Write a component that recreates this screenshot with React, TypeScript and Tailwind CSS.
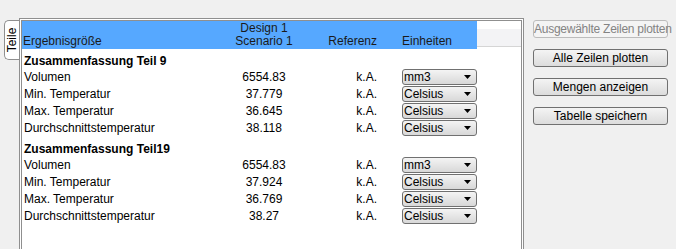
import React from 'react';

// ==========================================
// ERGEBNISTABELLE
// ==========================================

type Row = { label: string; value: string; unit: string };

const groups: { title: string; rows: Row[] }[] = [
  {
    title: 'Zusammenfassung Teil 9',
    rows: [
      { label: 'Volumen', value: '6554.83', unit: 'mm3' },
      { label: 'Min. Temperatur', value: '37.779', unit: 'Celsius' },
      { label: 'Max. Temperatur', value: '36.645', unit: 'Celsius' },
      { label: 'Durchschnittstemperatur', value: '38.118', unit: 'Celsius' },
    ],
  },
  {
    title: 'Zusammenfassung Teil19',
    rows: [
      { label: 'Volumen', value: '6554.83', unit: 'mm3' },
      { label: 'Min. Temperatur', value: '37.924', unit: 'Celsius' },
      { label: 'Max. Temperatur', value: '36.769', unit: 'Celsius' },
      { label: 'Durchschnittstemperatur', value: '38.27', unit: 'Celsius' },
    ],
  },
];

function Combo({ value }: { value: string }) {
  return (
    <div className="flex h-[16px] w-[75px] items-center justify-between rounded-[3px] border border-[#707070] bg-gradient-to-b from-[#f4f4f4] to-[#d8d8d8] pl-[1px] pr-[5px]">
      <span className="leading-[14px]">{value}</span>
      {/* Pfeil nach unten */}
      <svg width="7" height="4" viewBox="0 0 7 4" className="mb-[1px]">
        <path d="M0 0h7L3.5 4z" fill="#000" />
      </svg>
    </div>
  );
}

function Button({ label, disabled }: { label: string; disabled?: boolean }) {
  return (
    <button
      className={
        disabled
          ? 'h-[18px] w-[135px] whitespace-nowrap rounded-[3px] border border-[#bcbcbc] bg-[#f4f4f4] text-[12px] leading-[16px] tracking-[-0.25px] text-[#838383]'
          : 'h-[18px] w-[135px] whitespace-nowrap rounded-[3px] border border-[#707070] bg-gradient-to-b from-[#f4f4f4] to-[#dcdcdc] text-[12px] leading-[16px] text-black'
      }
    >
      {label}
    </button>
  );
}

export default function App() {
  return (
    <div
      className="flex h-[249px] w-[676px] overflow-hidden bg-[#f0f0f0] pt-[18px] text-[12px] text-black"
      style={{ fontFamily: '"Liberation Sans", Arial, sans-serif' }}
    >
      {/* Left: vertical tab */}
      <div className="w-[19px] shrink-0 pl-[4px] pt-[2px]">
        <div className="flex h-[40px] w-[16px] items-center justify-center rounded-l-[5px] border border-r-0 border-[#8f8f8f] bg-white">
          <span className="-rotate-90 whitespace-nowrap leading-[12px]">Teile</span>
        </div>
      </div>

      {/* Center: table frame */}
      <div className="h-[260px] w-[505px] shrink-0 border border-[#8f8f8f] bg-white p-[1px]">
        <div className="h-full border-l border-t border-r border-[#8f8f8f] bg-white">
          {/* Header */}
          <div className="flex h-[28px]">
            <div className="flex w-[455px] items-end bg-[#56a8ff] pb-[1px] leading-[13px] text-[#1a1a1a]">
              <div className="w-[196px] pl-[1px]">Ergebnisgröße</div>
              <div className="w-[92px] text-center">
                Design 1
                <br />
                Scenario 1
              </div>
              <div className="w-[68px] pr-[1px] text-right">Referenz</div>
              <div className="w-[99px] pl-[24px]">Einheiten</div>
            </div>
            <div className="flex-1 pt-[8px]">
              <div className="h-[18px] border-b border-[#d5d5d5] bg-[#f3f3f5]" />
            </div>
          </div>

          {/* Body */}
          {groups.map((g) => (
            <div key={g.title}>
              <div className="flex h-[20px] items-end pl-[2px] font-bold leading-[16px]">{g.title}</div>
              {g.rows.map((r, i) => (
                <div key={i} className="flex h-[17px] items-start leading-[17px]">
                  <div className="w-[196px] pl-[2px]">{r.label}</div>
                  <div className="w-[92px] text-center">{r.value}</div>
                  <div className="w-[68px] pr-[1px] text-right">k.A.</div>
                  <div className="w-[99px] pl-[24px]">
                    <Combo value={r.unit} />
                  </div>
                </div>
              ))}
            </div>
          ))}
        </div>
      </div>

      {/* Right: buttons */}
      <div className="ml-[9px] flex flex-col gap-[11px] pt-[2px]">
        <Button label="Ausgewählte Zeilen plotten" disabled />
        <Button label="Alle Zeilen plotten" />
        <Button label="Mengen anzeigen" />
        <Button label="Tabelle speichern" />
      </div>
    </div>
  );
}
